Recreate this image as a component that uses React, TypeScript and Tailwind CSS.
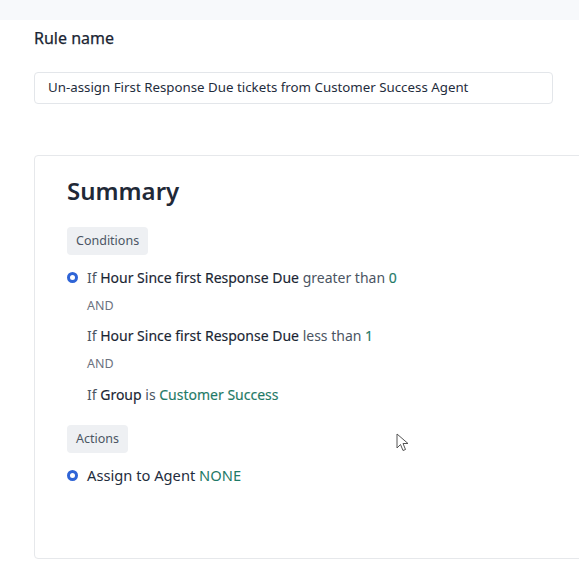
export default function App() {
  return (
    <div className="relative h-[572px] overflow-hidden bg-white font-['Noto_Sans',sans-serif] text-[#1f2d3d]">
      <div className="h-5 bg-[#f7f9fb]" />
      <div className="pl-[34px]">
        <p className="mt-[6px] text-[16px] leading-6 text-[#1a2533] [-webkit-text-stroke:0.25px_#1a2533]">Rule name</p>
        <div className="mt-[22px] flex h-8 w-[519px] items-center rounded border border-[#e3e6ea] px-[13px] text-[13.3px] text-[#1f2d3d]">
          Un-assign First Response Due tickets from Customer Success Agent
        </div>
        <div className="mt-[51px] h-[404px] w-[560px] rounded-l border border-[#e6e8eb] pl-8 pt-[17px]">
          <h1 className="text-[24px] font-semibold leading-9 text-[#1f2937]">Summary</h1>
          <div className="mt-[18px] inline-flex h-7 items-center rounded bg-[#eef0f3] px-[9px] text-[12.5px] text-[#4b5563]">
            Conditions
          </div>
          <div className="mt-2 flex flex-col">
            <div className="flex h-7 items-center gap-[9px]">
              <span className="h-[11px] w-[11px] rounded-full border-[3px] border-[#2f64d6]" />
              <p className="text-[14px] text-[#4b5563]">
                If <span className="text-[#1a2533] [-webkit-text-stroke:0.15px_#1a2533]">Hour Since first Response Due</span> greater than <span className="text-[#1f7a67] [-webkit-text-stroke:0.15px_#1f7a67]">0</span>
              </p>
            </div>
            <p className="flex h-[30px] items-center pl-[20px] text-[12.5px] text-[#6b7280]">AND</p>
            <p className="flex h-[29px] items-center pl-[20px] text-[14px] text-[#4b5563]">
              <span>If <span className="text-[#1a2533] [-webkit-text-stroke:0.15px_#1a2533]">Hour Since first Response Due</span> less than <span className="text-[#1f7a67] [-webkit-text-stroke:0.15px_#1f7a67]">1</span></span>
            </p>
            <p className="flex h-[29px] items-center pl-[20px] text-[12.5px] text-[#6b7280]">AND</p>
            <p className="flex h-[30px] items-center pl-[20px] text-[14px] text-[#4b5563]">
              <span>If <span className="text-[#1a2533] [-webkit-text-stroke:0.15px_#1a2533]">Group</span> is <span className="text-[#1f7a67] [-webkit-text-stroke:0.15px_#1f7a67]">Customer Success</span></span>
            </p>
          </div>
          <div className="mt-[16px] inline-flex h-7 items-center rounded bg-[#eef0f3] px-[9px] text-[12.5px] text-[#4b5563]">
            Actions
          </div>
          <div className="mt-2 flex h-7 items-center gap-[9px]">
            <span className="h-[11px] w-[11px] rounded-full border-[3px] border-[#2f64d6]" />
            <p className="text-[14.7px] text-[#1f2d3d]">
              Assign to Agent <span className="text-[#1f7a67]">NONE</span>
            </p>
          </div>
        </div>
      </div>
      {/* mouse pointer */}
      <svg className="absolute left-[396px] top-[433px]" width="14" height="20" viewBox="0 0 14 20">
        <path d="M1 1 L1 15 L4.5 11.5 L7 17.5 L9.5 16.5 L7 10.5 L12 10.5 Z" fill="#fff" stroke="#555" strokeWidth="1" strokeLinejoin="round" />
      </svg>
    </div>
  )
}
